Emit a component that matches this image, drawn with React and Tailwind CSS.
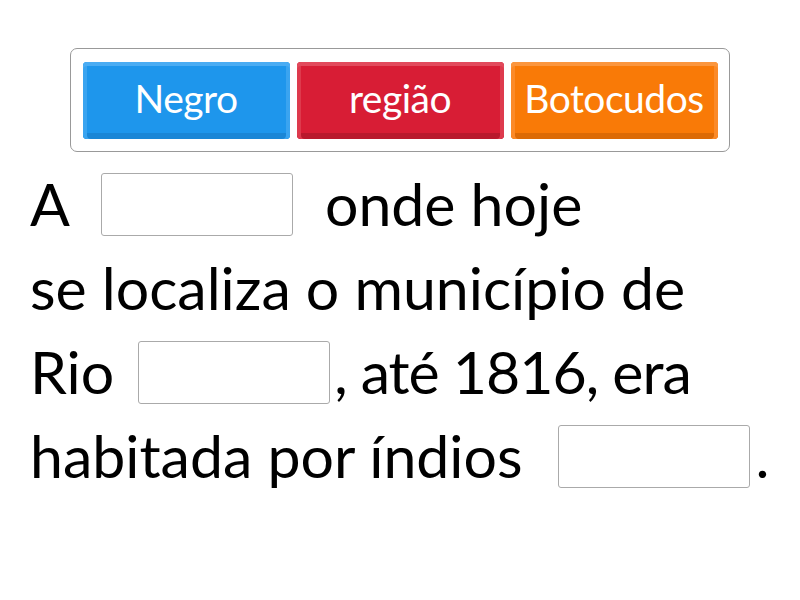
export default function App() {
  const font = { fontFamily: "Lato, 'Open Sans', sans-serif" };
  const Btn = ({ label, cls }) => (
    <div className={`w-[207px] h-[77px] rounded-[4px] flex items-center justify-center pb-[3px] text-white text-[39px] tracking-[-0.5px] ${cls}`}>
      {label}
    </div>
  );
  const Box = () => (
    <span className="block w-[192px] h-[63px] border border-[#aaa] rounded-[3px] bg-white" />
  );
  return (
    <div className="w-[800px] h-[600px] bg-white text-black" style={font}>
      <div className="pt-[48px] flex justify-center">
        <div className="w-[660px] ml-[-1px] h-[104px] border border-[#999] rounded-[7px] flex items-center gap-[7px] pl-[12px]">
          <Btn label="Negro" cls="bg-[#1e96ec] shadow-[inset_0_4px_0_#4aacf3,inset_4px_0_0_#3aa4f0,inset_-4px_0_0_#3aa4f0,inset_0_-6px_0_#1a86d6]" />
          <Btn label="região" cls="bg-[#d81d35] shadow-[inset_0_4px_0_#e24a5c,inset_4px_0_0_#de3a4d,inset_-4px_0_0_#de3a4d,inset_0_-6px_0_#b9192d]" />
          <Btn label="Botocudos" cls="bg-[#f97a07] shadow-[inset_0_4px_0_#fb963e,inset_4px_0_0_#fb8a28,inset_-4px_0_0_#fb8a28,inset_0_-6px_0_#dc6a05]" />
        </div>
      </div>
      <div className="pl-[30px] text-[59px] leading-[84px] mt-[10px]">
        <div className="flex items-center h-[84px]">
          <span>A</span>
          <span className="ml-[31px]"><Box /></span>
          <span className="ml-[32px]">onde hoje</span>
        </div>
        <div className="flex items-center h-[84px]">
          <span>se localiza o município de</span>
        </div>
        <div className="flex items-center h-[84px]">
          <span>Rio</span>
          <span className="ml-[24px]"><Box /></span>
          <span className="ml-[4px] tracking-[-1px]">, até 1816, era</span>
        </div>
        <div className="flex items-center h-[84px]">
          <span>habitada por índios</span>
          <span className="ml-[35px]"><Box /></span>
          <span className="ml-[6px]">.</span>
        </div>
      </div>
    </div>
  );
}
